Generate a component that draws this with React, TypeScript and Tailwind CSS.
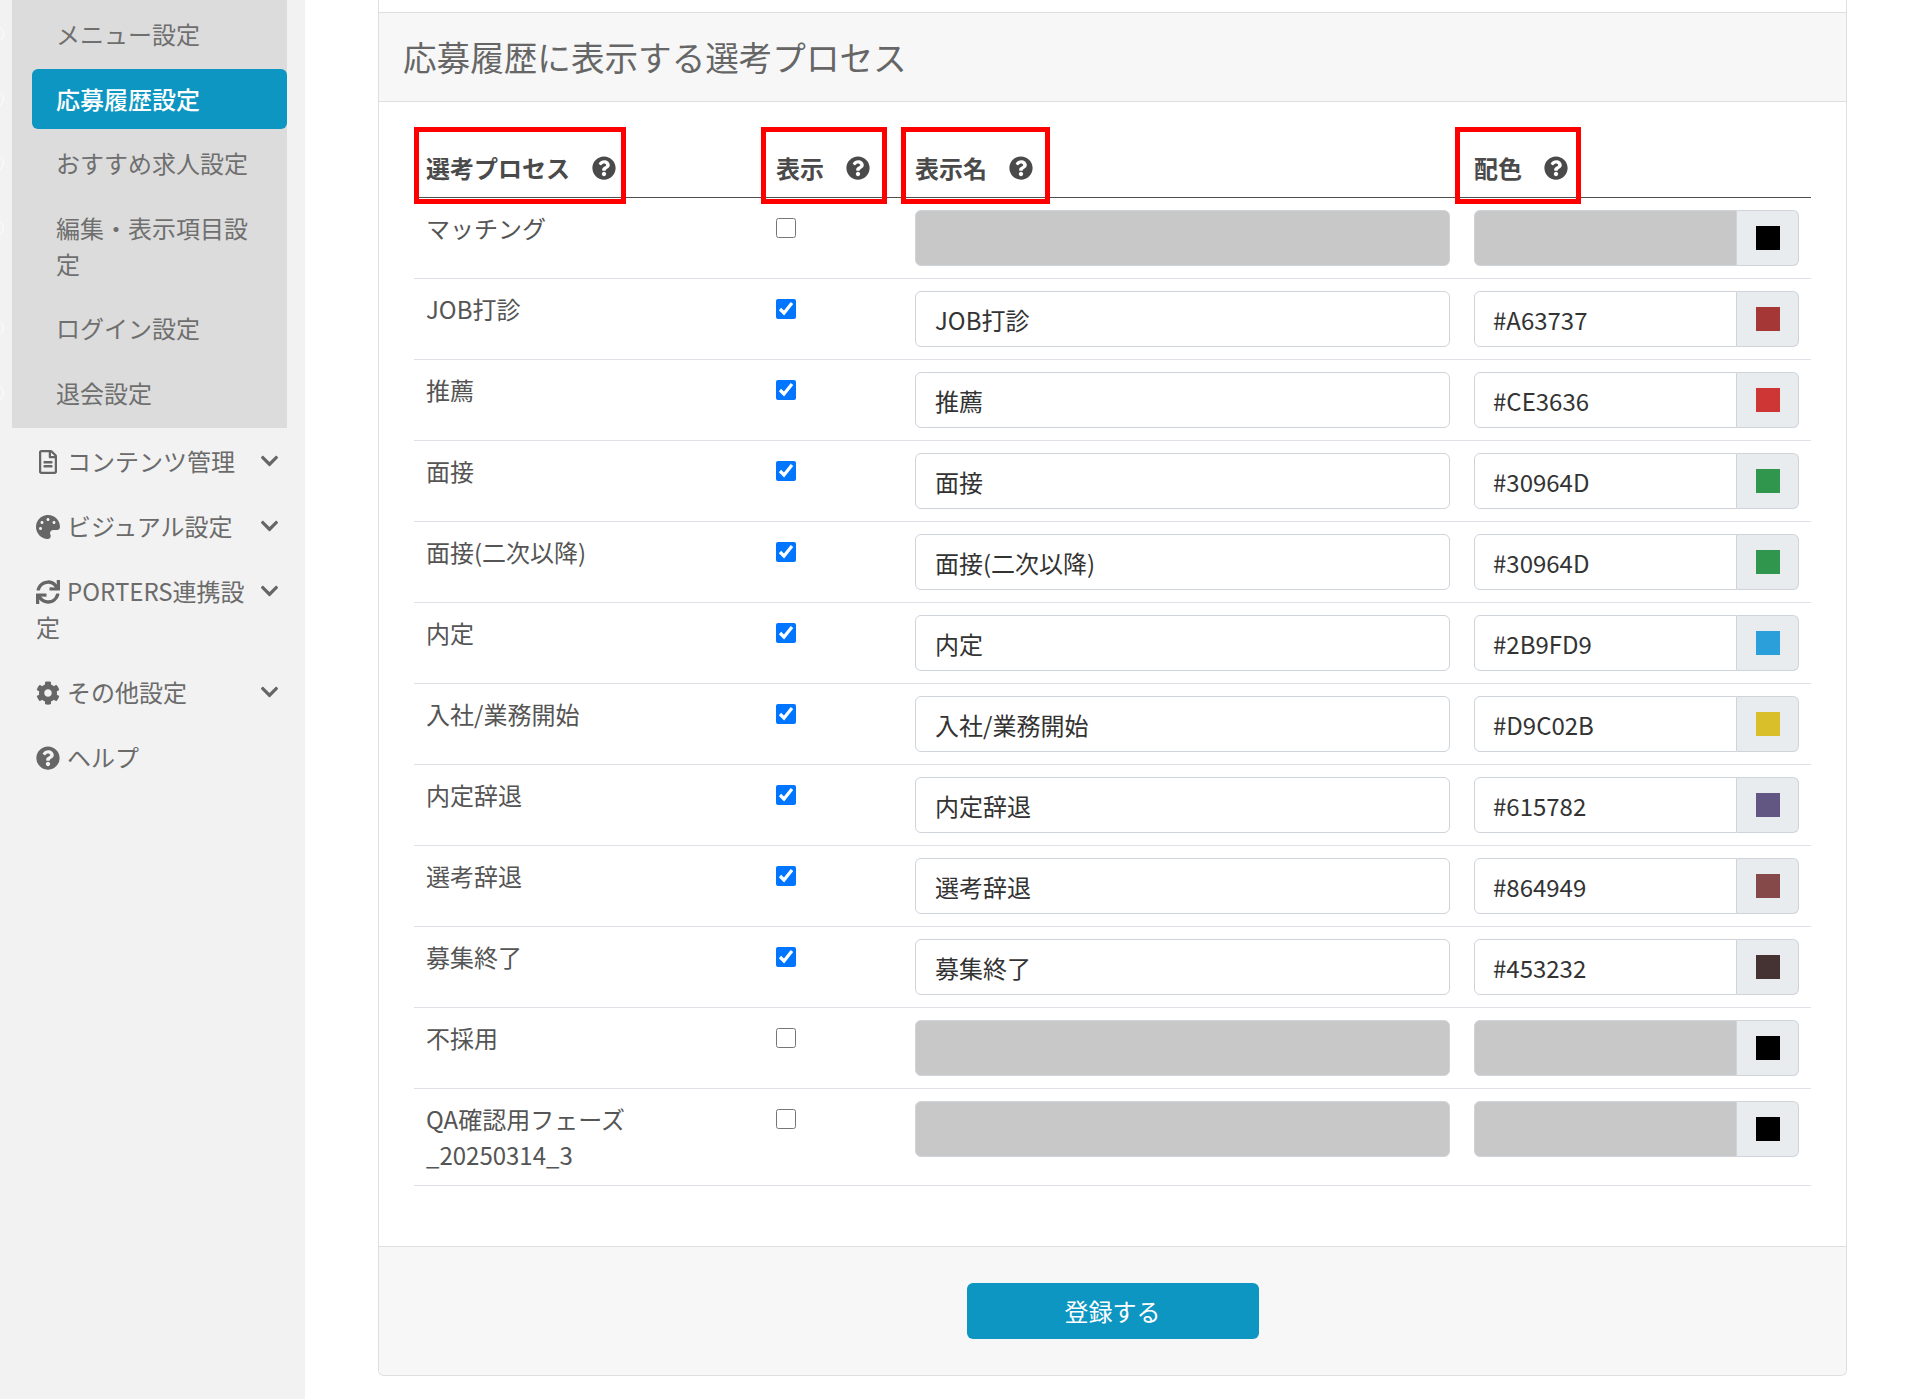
import { FaChevronDown, FaCog, FaPalette, FaQuestionCircle, FaRegFileAlt, FaSync } from "react-icons/fa";
import type { ReactNode } from "react";

const subMenus = [
  { label: "メニュー設定" },
  { label: "応募履歴設定", active: true },
  { label: "おすすめ求人設定" },
  { label: "編集・表示項目設定" },
  { label: "ログイン設定" },
  { label: "退会設定" },
];

const phases = [
  { name: "マッチング", checked: false, color: "" },
  { name: "JOB打診", checked: true, color: "#A63737" },
  { name: "推薦", checked: true, color: "#CE3636" },
  { name: "面接", checked: true, color: "#30964D" },
  { name: "面接(二次以降)", checked: true, color: "#30964D" },
  { name: "内定", checked: true, color: "#2B9FD9" },
  { name: "入社/業務開始", checked: true, color: "#D9C02B" },
  { name: "内定辞退", checked: true, color: "#615782" },
  { name: "選考辞退", checked: true, color: "#864949" },
  { name: "募集終了", checked: true, color: "#453232" },
  { name: "不採用", checked: false, color: "" },
  { name: "QA確認用フェーズ_20250314_3", checked: false, color: "" },
];

function NavItem({ icon, label, chevron }: { icon: ReactNode; label: string; chevron?: boolean }) {
  return (
    <div className="h-fit pl-[36px] pr-[25px] pt-[12px] pb-[17px] text-[#6b6b6b]">
      {chevron && <FaChevronDown className="float-right mt-[8px] h-[20px] w-[21px] text-[#666666]" />}
      <span className="mr-[7px] inline-block align-[-3px] text-[24px] text-[#666666]">{icon}</span>
      {label}
    </div>
  );
}

function Sidebar() {
  return (
    <aside className="w-[305px] shrink-0 overflow-hidden bg-[#f2f2f2] text-[24px] leading-[36px]">
      <ul className="ml-[12px] w-[275px] bg-[#dcdcdc] pt-[4px] pb-[0.5px]">
        {subMenus.map((m) => (
          <li
            key={m.label}
            className={`relative mb-[4.5px] ml-[20px] rounded-[6px] py-[12px] pl-[24px] pr-[24px] ${
              m.active ? "bg-[#0d96c1] font-medium text-white" : "text-[#6f6f6f]"
            }`}
          >
            <span className="absolute left-[-44px] top-[22px] h-[16px] w-[16px] rounded-full border border-white/80" />
            {m.label}
          </li>
        ))}
      </ul>
      <nav className="pt-[3px]">
        <NavItem icon={<FaRegFileAlt />} label="コンテンツ管理" chevron />
        <NavItem icon={<FaPalette />} label="ビジュアル設定" chevron />
        <NavItem icon={<FaSync />} label="PORTERS連携設定" chevron />
        <NavItem icon={<FaCog />} label="その他設定" chevron />
        <NavItem icon={<FaQuestionCircle />} label="ヘルプ" />
      </nav>
    </aside>
  );
}

function HeadCell({ label, boxClass }: { label: string; boxClass: string }) {
  return (
    <th className="relative border-b border-[#4f4f4f] px-[12px] pt-[12px] pb-[11px] text-left font-bold text-[#4a4a4a]">
      <span className="flex items-center">
        {label}
        <FaQuestionCircle className="ml-[22px] h-[24px] w-[24px] text-[#4a4a4a]" />
      </span>
      <span className={`absolute top-[-11px] h-[77px] border-[5px] border-[#ff0000] ${boxClass}`} />
    </th>
  );
}

function PhaseRow({ name, checked, color }: { name: string; checked: boolean; color: string }) {
  const disabledClass = checked ? "bg-white" : "bg-[#c8c8c8]";
  return (
    <tr className="border-b border-[#dee2e6]">
      <td className="px-[12px] py-[12px] align-top text-[#555555]">{name}</td>
      <td className="px-[12px] pt-[20px] align-top">
        <input type="checkbox" checked={checked} readOnly className="block h-[20px] w-[20px]" />
      </td>
      <td className="px-[12px] py-[12px] align-top">
        <input
          type="text"
          readOnly
          value={checked ? name : ""}
          className={`h-[56px] w-full rounded-[6px] border border-[#ced4da] px-[19px] text-[24px] text-[#333333] ${disabledClass}`}
        />
      </td>
      <td className="py-[12px] pl-[12px] pr-[12px] align-top">
        <div className="flex h-[56px]">
          <input
            type="text"
            readOnly
            value={color}
            className={`h-full w-[263px] rounded-l-[6px] border border-[#ced4da] px-[18px] text-[24px] text-[#333333] ${disabledClass}`}
          />
          <span className="flex w-[62px] items-center justify-center rounded-r-[6px] border border-l-0 border-[#ced4da] bg-[#e9ecef]">
            <span className="h-[24px] w-[24px]" style={{ backgroundColor: color || "#000000" }} />
          </span>
        </div>
      </td>
    </tr>
  );
}

export default function App() {
  return (
    <div className="flex min-h-[1399px] bg-white text-[24px] leading-[36px] [font-family:'Noto_Sans_CJK_JP','Noto_Sans',sans-serif]">
      <Sidebar />
      <main className="flex-1 px-[73px] pb-[24px]">
        <div className="rounded-b-[6px] border-x border-b border-[#dfdfdf]">
          <div className="h-[12px]" />
          <h2 className="h-[90px] border-y border-[#dfdfdf] bg-[#f7f7f7] pl-[24px] text-[33.6px] font-normal leading-[88px] text-[#666666]">
            応募履歴に表示する選考プロセス
          </h2>
          <div className="px-[35px] pt-[36px] pb-[60px]">
            <table className="w-[1397px] table-fixed border-collapse">
              <colgroup>
                <col className="w-[350px]" />
                <col className="w-[139px]" />
                <col className="w-[559px]" />
                <col className="w-[349px]" />
              </colgroup>
              <thead>
                <tr>
                  <HeadCell label="選考プロセス" boxClass="left-0 w-[212px]" />
                  <HeadCell label="表示" boxClass="left-[-3px] w-[126px]" />
                  <HeadCell label="表示名" boxClass="left-[-2px] w-[149px]" />
                  <HeadCell label="配色" boxClass="left-[-7px] w-[126px]" />
                </tr>
              </thead>
              <tbody>
                {phases.map((p) => (
                  <PhaseRow key={p.name} {...p} />
                ))}
              </tbody>
            </table>
          </div>
          <div className="flex justify-center rounded-b-[6px] border-t border-[#dfdfdf] bg-[#f7f7f7] pt-[36px] pb-[36px]">
            <button
              type="button"
              className="h-[56px] w-[292px] rounded-[6px] bg-[#0d96c1] text-[24px] text-white"
            >
              登録する
            </button>
          </div>
        </div>
      </main>
    </div>
  );
}
